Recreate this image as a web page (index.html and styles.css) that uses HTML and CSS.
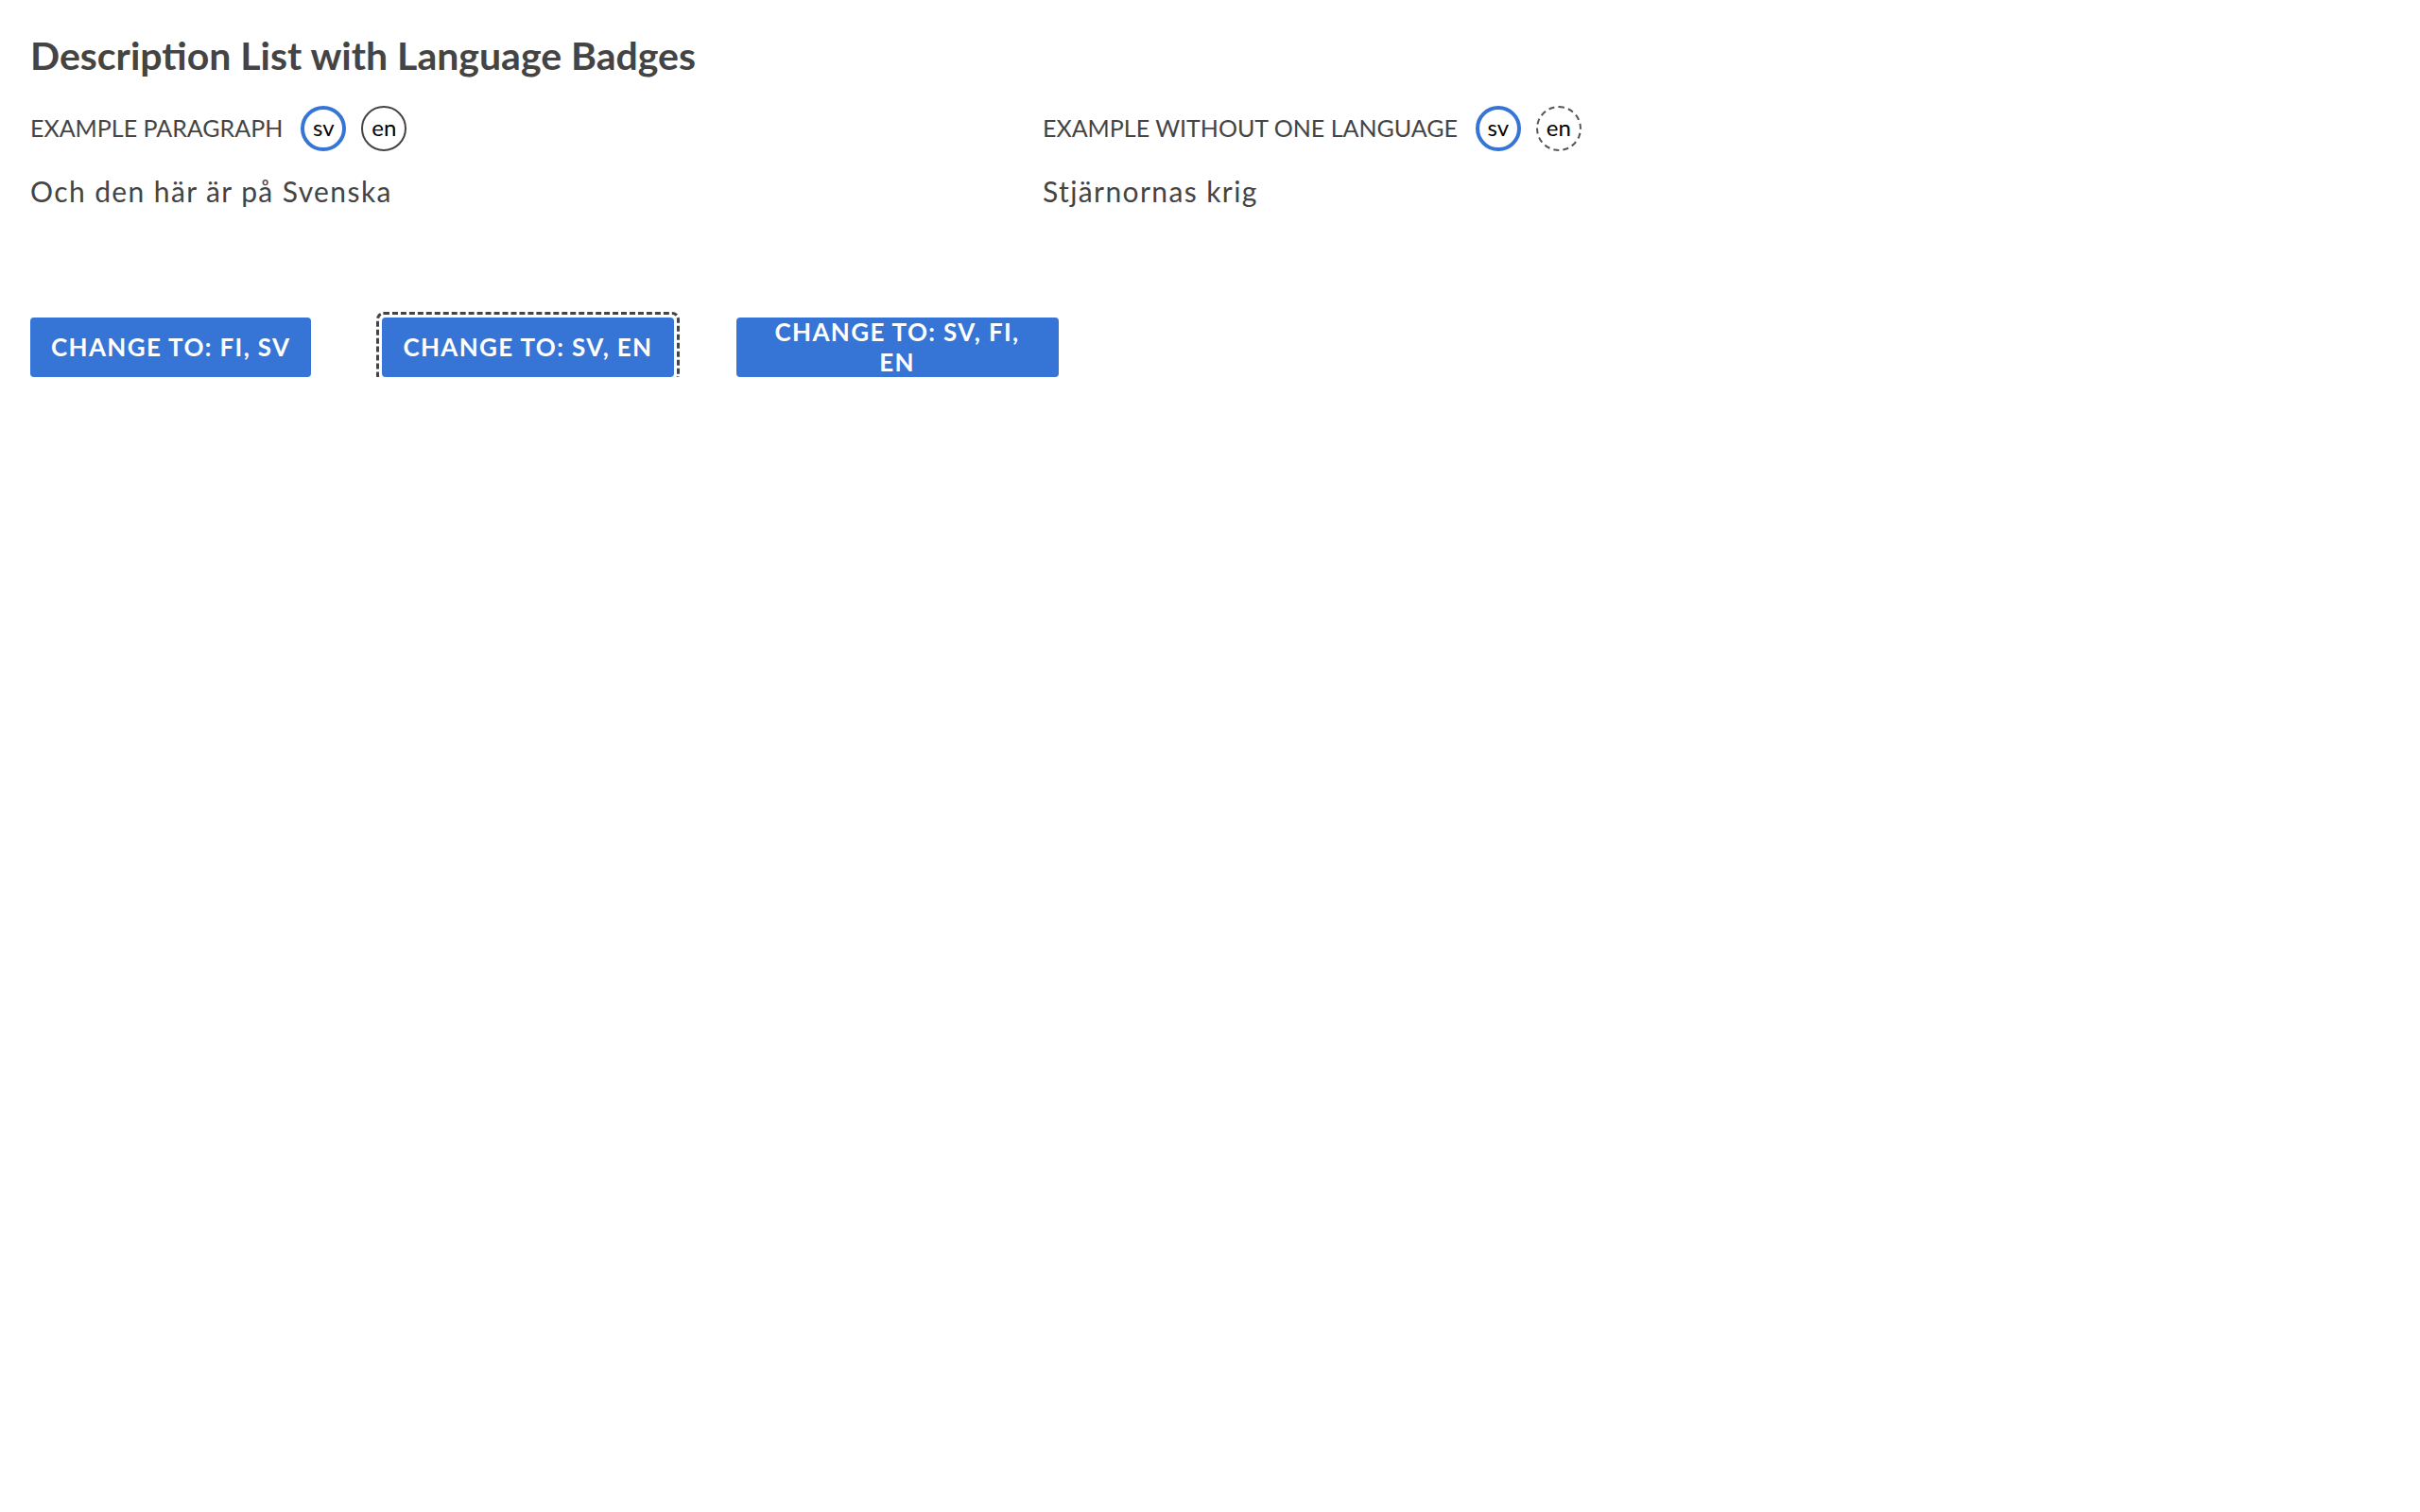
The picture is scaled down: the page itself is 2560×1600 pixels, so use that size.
FILE: index.html
```html
<!DOCTYPE html>
<html lang="sv">
<head>
<meta charset="utf-8">
<title>Description List with Language Badges</title>
<link rel="stylesheet" href="styles.css">
</head>
<body>
<main class="page">
  <h1 class="title">Description List with Language Badges</h1>
  <dl class="dlist">
    <div class="item">
      <dt class="term">
        <span class="term-text">Example paragraph</span>
        <span class="badge badge-active">sv</span>
        <span class="badge">en</span>
      </dt>
      <dd class="desc">Och den här är på Svenska</dd>
    </div>
    <div class="item">
      <dt class="term">
        <span class="term-text">Example without one language</span>
        <span class="badge badge-active">sv</span>
        <span class="badge badge-missing">en</span>
      </dt>
      <dd class="desc">Stjärnornas krig</dd>
    </div>
  </dl>
  <div class="actions">
    <button class="btn btn-first" type="button">Change to: fi, sv</button>
    <button class="btn btn-focus" type="button">Change to: sv, en</button>
    <button class="btn btn-narrow" type="button">Change to: sv, fi, en</button>
  </div>
</main>
</body>
</html>
```
FILE: styles.css
```css
* { box-sizing: border-box; }
html, body { margin: 0; padding: 0; background: #ffffff; }
body {
  font-family: "Lato", "Open Sans", sans-serif;
  color: #444444;
}
.page {
  padding: 35px 32px 0 32px;
}
.title {
  margin: 0;
  font-size: 41px;
  line-height: 48px;
  font-weight: 700;
  color: #444444;
}
.dlist {
  margin: 29px 0 0 0;
  display: grid;
  grid-template-columns: 1071px 1fr;
}
.item { margin: 0; }
.term {
  display: flex;
  align-items: center;
  height: 48px;
}
.term-text {
  font-size: 25px;
  line-height: 30px;
  text-transform: uppercase;
  color: #444444;
  margin-right: 19px;
  margin-bottom: 3px;
}
.badge {
  width: 48px;
  height: 48px;
  border-radius: 50%;
  border: 2px solid #444444;
  display: flex;
  align-items: center;
  justify-content: center;
  font-size: 24px;
  line-height: 1;
  color: #000000;
  margin-right: 16px;
  padding-bottom: 2px;
}
.badge-active {
  border: 4px solid #3674d5;
}
.badge-missing {
  border: 2px dashed #555555;
}
.desc {
  margin: 22px 0 0 0;
  font-size: 30px;
  line-height: 40px;
  font-weight: 400;
  letter-spacing: 1.4px;
  color: #444444;
}
.actions {
  margin-top: 114px;
  display: flex;
  align-items: flex-start;
}
.btn {
  font-family: "Lato", "Open Sans", sans-serif;
  font-size: 26px;
  font-weight: 700;
  letter-spacing: 1.35px;
  text-transform: uppercase;
  color: #ffffff;
  background: #3674d5;
  border: none;
  border-radius: 4px;
  min-height: 63px;
  line-height: 31.5px;
  padding: 0 22px;
  text-align: center;
}
.btn-first { margin-right: 75px; }
.btn-focus {
  position: relative;
  margin-right: 66px;
}
.btn-focus::after {
  content: "";
  position: absolute;
  top: -6px;
  bottom: -6px;
  left: -6px;
  right: -6px;
  border: 3px dashed #444444;
  border-radius: 8px;
  pointer-events: none;
}
.btn-narrow { width: 341px; }
```
